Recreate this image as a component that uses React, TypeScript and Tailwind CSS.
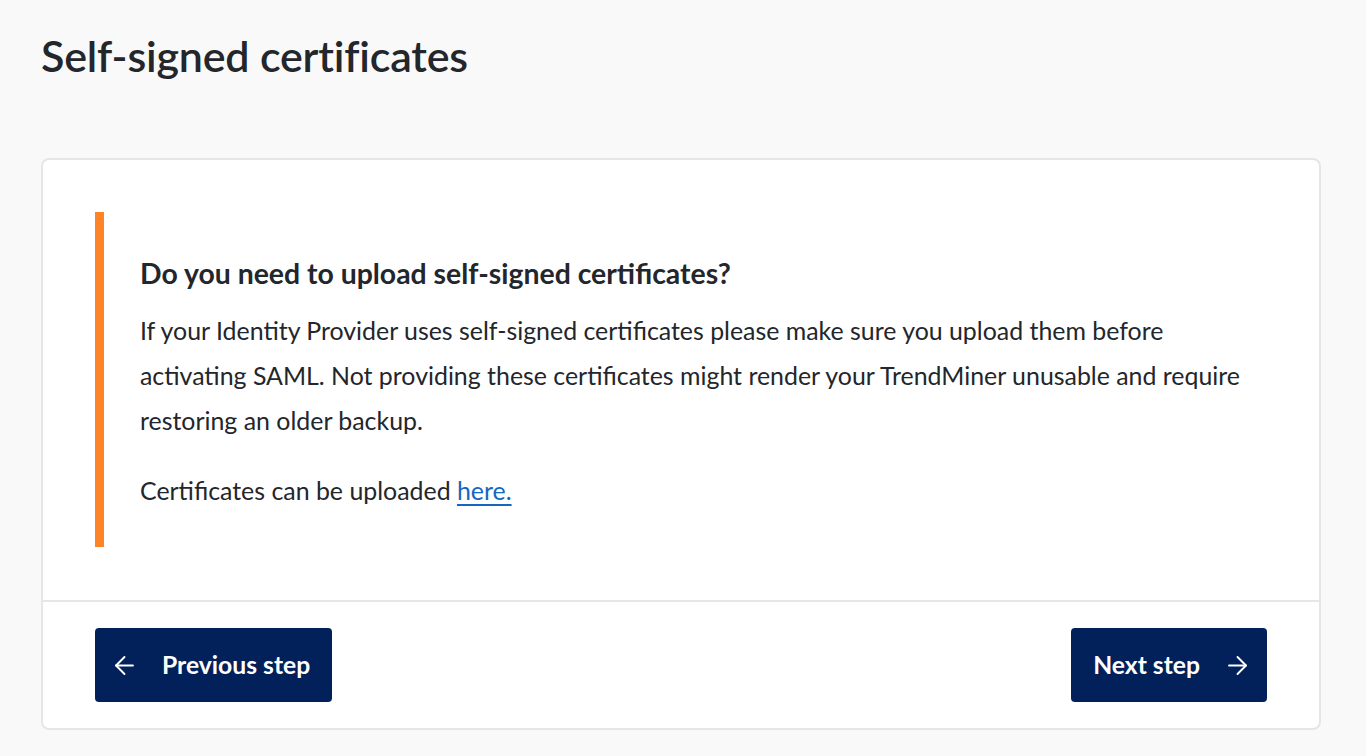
import { ArrowLeft, ArrowRight } from 'lucide-react';

export default function App() {
  return (
    <div className="min-h-screen bg-[#f9f9f9] text-[#23262b] pl-[41px] pr-[45px] pt-[28px] pb-6" style={{ fontFamily: 'Lato, "Noto Sans", sans-serif' }}>
      <h1 className="text-[43px] leading-[56px] font-semibold tracking-[-0.2px] mb-[74px]">Self-signed certificates</h1>

      <div className="bg-white border-2 border-[#e6e6e6] rounded-[8px]">
        {/* info block */}
        <div className="px-[52px] pt-[52px] pb-[53px]">
          <div className="border-l-[9px] border-[#fe8426] pl-[36px] pt-[46px] pb-[34px]">
            <div className="max-w-[1112px]">
              <h2 className="text-[28.4px] leading-[30px] font-bold mb-[20px]">Do you need to upload self-signed certificates?</h2>
              <p className="text-[24.9px] leading-[45px] mb-[25px]">
                If your Identity Provider uses self-signed certificates please make sure you upload them before activating SAML. Not providing these certificates might render your TrendMiner unusable and require restoring an older backup.
              </p>
              <p className="text-[24.9px] leading-[45px]">
                Certificates can be uploaded{' '}
                <a href="#" className="text-[#1466c2] underline underline-offset-4">here.</a>
              </p>
            </div>
          </div>
        </div>

        {/* footer */}
        <div className="border-t-2 border-[#e6e6e6] flex justify-between px-[52px] pt-[26px] pb-[26px]">
          <button className="h-[74px] bg-[#02205a] text-white rounded-[4px] flex items-center gap-[23px] pl-[15px] pr-[22px] text-[24.7px] font-bold">
            <ArrowLeft size={29} strokeWidth={1.6} />
            Previous step
          </button>
          <button className="h-[74px] bg-[#02205a] text-white rounded-[4px] flex items-center gap-[23px] pl-[22px] pr-[15px] text-[24.7px] font-bold">
            Next step
            <ArrowRight size={29} strokeWidth={1.6} />
          </button>
        </div>
      </div>
    </div>
  );
}
